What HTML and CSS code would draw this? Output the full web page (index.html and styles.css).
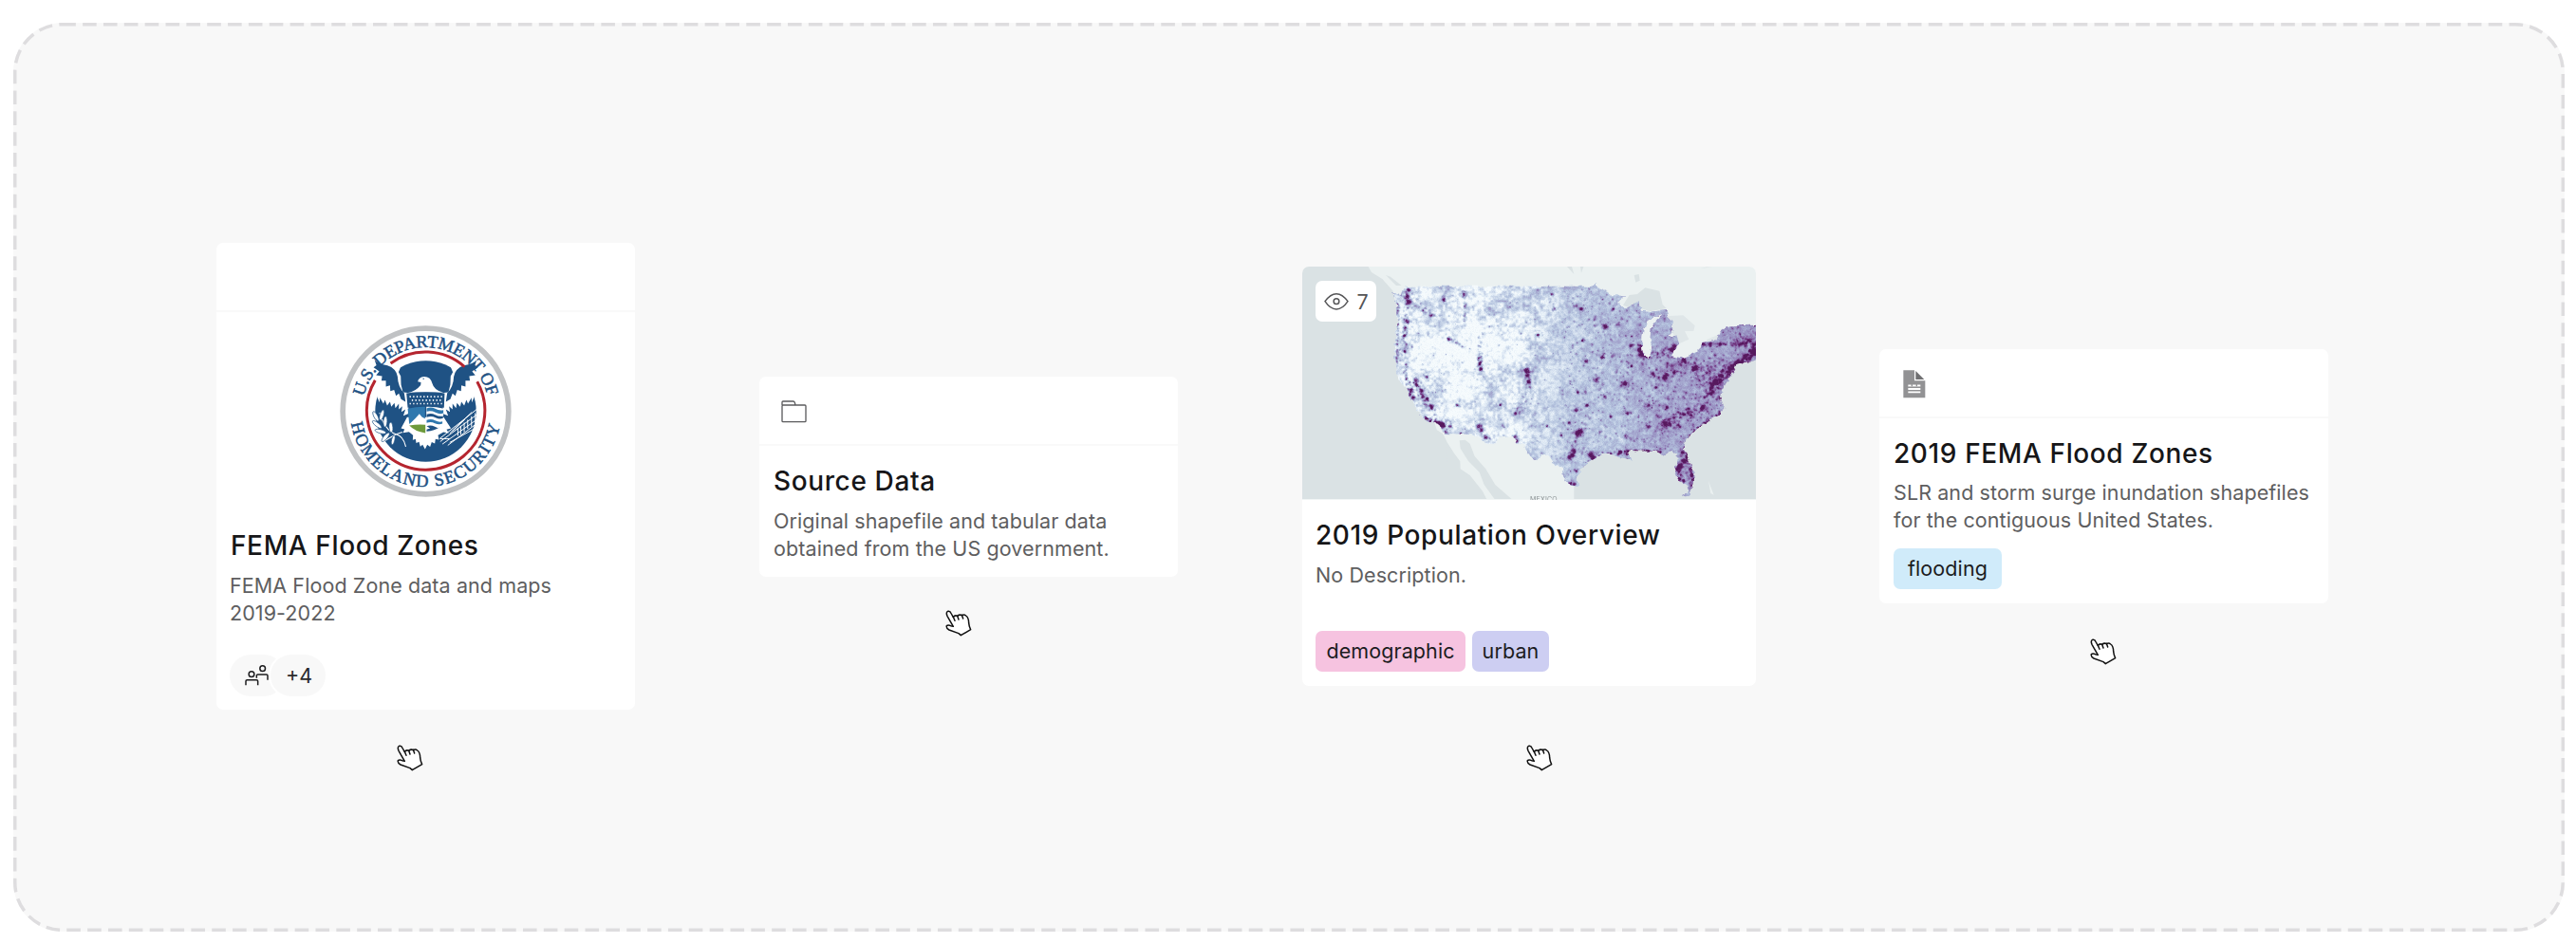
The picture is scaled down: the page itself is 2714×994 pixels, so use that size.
FILE: index.html
```html
<!DOCTYPE html>
<html lang="en">
<head>
<meta charset="utf-8">
<title>Content cards</title>
<link rel="stylesheet" href="styles.css">
</head>
<body>
<svg class="defs" width="0" height="0">
  <symbol id="hand" viewBox="54 45 84 84">
    <path d="M60 64Q55 52 62 49Q69 47 73 57L79 68Q84 60 92 64Q99 58 106 62Q113 57 119 63Q128 69 128 86L130 97L134 107L103 125L96 119L66 108Q56 102 58 95Q63 91 71 95L79 97Z" fill="#fff"/>
    <path d="M79 67L84 79M92 64L96 75M106 61L110 72" fill="none"/>
  </symbol>
</svg>
<main class="panel">
  <svg class="outline" width="2688" height="958"><rect x="1.75" y="1.75" width="2684.5" height="954.5" rx="50"/></svg>

  <section class="column column-agency">
    <article class="card">
      <div class="card-head"></div>
      <div class="seal-wrap">
        <svg class="seal" viewBox="24 24 544 544">
          <defs>
            <path id="arc-top" d="M100 250A201 201 0 0 1 492 250"/>
            <path id="arc-bottom" d="M60 334A239 239 0 0 0 532 334"/>
            <g id="wing">
              <path d="M122 158L140 195L142 250L150 268L151 253L162 272L167 260L174 278L183 266L187 282L197 270L200 286L211 272L211 290L222 280L219 298L232 290L225 310L240 304L246 238L224 236L218 212L217 185L210 172L216 158L205 130L160 110Z" fill="#fff"/>
              <path d="M134 133Q145 147 175 151Q202 160 207 186Q208 218 228 239L232 266L218 258L211 240L202 247L196 228L184 232L183 214L170 218L170 199L156 199L158 185L139 182L149 170L131 157L140 150Z" fill="#1f5284"/>
            </g>
          </defs>
          <circle cx="296" cy="296" r="262.500" fill="#fff" stroke="#c0c2c4" stroke-width="17"/>
          <circle cx="296" cy="296" r="160" fill="#1f5284"/>
          <use href="#wing"/>
          <use href="#wing" transform="matrix(-1 0 0 1 592 0)"/>
          <path d="M185 144A187 187 0 0 1 419 155M459 202A187 187 0 1 1 136 198" fill="none" stroke="#b5252f" stroke-width="9"/>
          <path d="M271 202Q273 188 291 186Q312 186 317 208Q322 229 352 237L240 237Q263 234 280 213L281 204Z" fill="#fff"/>
          <circle cx="289" cy="193" r="2" fill="#1f5284"/>
          <path d="M237 315L218 350L229 353L224 364L243 361L256 372L255 387L264 384L266 397L275 393L279 408L286 402L294 416L301 402L310 409L315 394L325 398L327 384L338 386L335 372L352 362L369 365L362 354L376 350L353 315Z" fill="#fff"/>
          <path d="M235 239Q296 231 356 239L354 285Q296 277 239 285Z" fill="#1f5284"/>
          <path d="M245 250H350M252 261H345M245 272H350" stroke="#fff" stroke-width="5" stroke-dasharray="4 7" fill="none"/>
          <path d="M239 288Q270 281 294 282V336H244Z" fill="#2f78ae"/>
          <path d="M244 337L264 318L276 304L284 314L295 320V346H250Z" fill="#fff"/>
          <path d="M244 341Q270 337 295 339V365Q262 360 244 341Z" fill="#6d9a3b"/>
          <path d="M298 282Q328 281 353 288L350 340Q337 359 298 364Z" fill="#fff"/>
          <path d="M299 287Q313 281 326 288T352 292V302Q341 307 327 300T299 297Z" fill="#2f78ae"/>
          <path d="M299 306Q313 300 326 307T351 311V318Q340 323 327 316T299 315Z" fill="#1f5284"/>
          <path d="M299 324Q313 318 326 325T349 328V335Q338 340 325 334T299 333Z" fill="#2f78ae"/>
          <path d="M299 343Q312 338 325 345T339 347Q325 357 299 360V354L310 350Z" fill="#1f5284"/>
          <path d="M150 300Q165 355 202 369Q225 374 233 408M202 369L160 393M202 369L222 362" fill="none" stroke="#fff" stroke-width="3.500"/>
          <g fill="#fff" stroke="#1f5284" stroke-width="2">
            <ellipse cx="138" cy="312" rx="6" ry="17" transform="rotate(-28 138 312)"/><ellipse cx="157" cy="308" rx="6" ry="17" transform="rotate(18 157 308)"/>
            <ellipse cx="142" cy="338" rx="6" ry="18" transform="rotate(-52 142 338)"/><ellipse cx="168" cy="329" rx="6" ry="17" transform="rotate(4 168 329)"/>
            <ellipse cx="153" cy="360" rx="6" ry="18" transform="rotate(-75 153 360)"/><ellipse cx="186" cy="347" rx="6" ry="16" transform="rotate(-4 186 347)"/>
            <ellipse cx="169" cy="378" rx="6" ry="18" transform="rotate(40 169 378)"/><ellipse cx="193" cy="387" rx="5" ry="15" transform="rotate(12 193 387)"/>
          </g>
          <path d="M340 383L460 288M342 392L467 300M349 400L468 315M366 404L468 327M372 395L470 340M372 366L442 299M380 360L420 322M342 383H372M398 350V374M407 342V370M418 332V362M429 323V352M441 312V345M453 302V338" fill="none" stroke="#fff" stroke-width="3"/>
          <text class="seal-text"><textPath href="#arc-top" textLength="540">U.S. DEPARTMENT OF</textPath></text>
          <text class="seal-text"><textPath href="#arc-bottom" textLength="668">HOMELAND SECURITY</textPath></text>
        </svg>
      </div>
      <div class="card-body">
        <h2>FEMA Flood Zones</h2>
        <p>FEMA Flood Zone data and maps 2019-2022</p>
        <div class="members">
          <span class="pill"><svg width="25" height="22" viewBox="116 515 75 66" fill="none" stroke="#1c1c1e" stroke-width="4.500"><circle cx="137" cy="544" r="8.500"/><circle cx="172" cy="526" r="8.500"/><path d="M119 579V566Q119 562 123 562H153Q157 562 157 566V579M153 556V548Q153 545 157 545H184Q188 545 188 549V562"/></svg></span>
          <span class="pill pill-more">+4</span>
        </div>
      </div>
    </article>
    <svg class="hand"><use href="#hand"/></svg>
  </section>

  <section class="column column-source">
    <article class="card">
      <div class="card-head"><svg class="folder" width="27" height="24" viewBox="98 95 81 72" fill="none" stroke="#5b5b5d" stroke-width="4"><path d="M101 110V101Q101 98 104 98H136Q140 98 141 102L143 110M104 110H173Q176 110 176 113V160Q176 163 173 163H104Q101 163 101 160V113Q101 110 104 110Z"/></svg></div>
      <div class="card-body">
        <h2>Source Data</h2>
        <p>Original shapefile and tabular data obtained from the US government.</p>
      </div>
    </article>
    <svg class="hand"><use href="#hand"/></svg>
  </section>

  <section class="column column-map">
    <article class="card">
      <div class="map">
        <canvas id="map" width="478" height="246"></canvas>
        <span class="map-label">MEXICO</span>
        <div class="views"><svg width="26" height="20" viewBox="88 99 78 60" fill="none" stroke="#555557" stroke-width="4.500"><path d="M91 128Q108 104 127 104T163 128Q146 153 127 153T91 128Z"/><circle cx="127" cy="128" r="8.500"/></svg><span>7</span></div>
      </div>
      <div class="card-body">
        <h2>2019 Population Overview</h2>
        <p>No Description.</p>
        <div class="tags"><span class="tag tag-pink">demographic</span><span class="tag tag-violet">urban</span></div>
      </div>
    </article>
    <svg class="hand"><use href="#hand"/></svg>
  </section>

  <section class="column column-zones">
    <article class="card">
      <div class="card-head"><svg class="doc" width="24" height="30" viewBox="104 89 72 90"><path d="M105 90H140V123H174V177H105Z" fill="#929294"/><path d="M144 92L171 119H144Z" fill="#6f6f71"/><path d="M120 138H130M134 138H145M149 138H159M120 149H159M120 159H159" stroke="#fff" stroke-width="5.500"/><path d="M120 141.500H159" stroke="#c8c8c9" stroke-width="2"/></svg></div>
      <div class="card-body">
        <h2>2019 FEMA Flood Zones</h2>
        <p>SLR and storm surge inundation shapefiles for the contiguous United States.</p>
        <div class="tags"><span class="tag tag-blue">flooding</span></div>
      </div>
    </article>
    <svg class="hand"><use href="#hand"/></svg>
  </section>
</main>
<script src="map.js"></script>
</body>
</html>
```
FILE: styles.css
```css
* { box-sizing: border-box; }
body { margin: 0; background: #fff; font-family: Inter, "Liberation Sans", sans-serif; color: #161618; }
.defs { position: absolute; }
.panel { position: relative; width: 2688px; height: 958px; margin: 24px 0 0 14px; padding-left: 214px; border-radius: 52px; background: #f8f8f8; display: flex; align-items: flex-start; }
.outline { position: absolute; left: 0; top: 0; fill: none; stroke: #dedddf; stroke-width: 3.5; stroke-dasharray: 14.6 7.25; stroke-dashoffset: 0.5; }
.column { display: flex; flex-direction: column; flex: none; }
.column-agency { width: 441px; margin-top: 232px; }
.column-source { width: 441px; margin: 373px 0 0 131px; }
.column-map { width: 478px; margin: 257px 0 0 131px; }
.column-zones { width: 472.500px; margin: 344px 0 0 130px; }
.card { background: #fff; border-radius: 7px; overflow: hidden; }
.card-head { height: 73px; border-bottom: 2px solid #f9f9f9; }
.column-source .card-head { padding: 25px 0 0 22.500px; }
.column-zones .card-head { padding: 21.500px 0 0 24.500px; }
.folder, .doc { display: block; }
.seal-wrap { height: 209px; padding: 14px 130px 0; }
.seal { display: block; width: 181px; height: 181px; }
.seal-text { font: 55px "Liberation Serif", serif; fill: #1f5284; stroke: #1f5284; stroke-width: 1.6px; }
.card-body { padding: 19px 14px 14.500px; }
.column-source .card-body { padding-left: 15px; padding-bottom: 15px; }
.column-zones .card-body { padding-left: 15px; }
h2 { margin: 0 0 10px; font-size: 28px; line-height: 36px; font-weight: 500; letter-spacing: 0.62px; white-space: nowrap; }
.column-agency h2 { position: relative; left: 1px; }
.column-zones h2 { margin-bottom: 9px; }
p { margin: 0; font-size: 21.500px; line-height: 29px; letter-spacing: 0.09px; color: #5e5e60; }
.column-agency p { max-width: 380px; }
.members { display: flex; margin-top: 28.500px; }
.pill { height: 44px; width: 58px; border-radius: 22px; background: #f8f8f8; display: flex; align-items: center; padding-left: 16px; font-size: 21.500px; letter-spacing: 0; color: #2a2a2c; }
.pill-more { margin-left: -15px; box-shadow: 0 0 0 2px #fff; position: relative; }
.map { position: relative; height: 246px; overflow: hidden; }
.map canvas { display: block; }
.map-label { position: absolute; left: 240px; top: 241px; font-size: 7px; line-height: 9px; letter-spacing: 0.2px; color: #8b9294; }
.views { position: absolute; left: 14px; top: 15px; width: 64px; height: 43px; border-radius: 7px; background: #fff; display: flex; align-items: center; padding-left: 8.500px; gap: 9px; font-size: 21.500px; color: #555557; }
.tags { display: flex; gap: 7px; margin-top: 14.500px; }
.column-map .tags { margin-top: 43.500px; }
.tag { height: 43.500px; line-height: 43px; border-radius: 7px; text-align: center; font-size: 21.500px; letter-spacing: 0.1px; color: #1c1c1e; }
.tag-pink { width: 158px; background: #f6c3e0; }
.tag-violet { width: 81px; background: #cdcef2; }
.tag-blue { width: 114px; background: #d0ebfa; }
.hand { width: 28px; height: 28px; stroke: #111; stroke-width: 4.5; stroke-linejoin: round; stroke-linecap: round; }
.column-agency .hand { margin: 37px 0 0 190px; }
.column-source .hand { margin: 34.500px 0 0 195.500px; }
.column-map .hand { margin: 62.500px 0 0 235.500px; }
.column-zones .hand { margin: 37px 0 0 221.500px; }
```
FILE: map.js
```js
const W = 478, H = 246;
const canvas = document.getElementById('map');
const ctx = canvas.getContext('2d');

let seed = 41;
const rnd = () => {
  seed = (seed * 1664525 + 1013904223) >>> 0;
  return seed / 4294967296;
};

// Outlines are kept in thirds of a pixel, offset by (21, 18).
function trace(c, pts) {
  c.beginPath();
  for (let i = 0; i < pts.length; i += 2) c.lineTo((pts[i] - 21) / 3, (pts[i + 1] - 18) / 3);
  c.closePath();
}
function fill(pts, color) {
  trace(ctx, pts);
  ctx.fillStyle = color;
  ctx.fill();
}

const WATER = '#dae2e4', LAND = '#ebf1f1';
const us = [308,95,320,105,335,108,345,80,940,80,950,68,952,84,985,98,1000,108,1045,112,1020,132,1040,150,1060,145,1085,130,1095,155,1130,160,1170,156,1178,178,1190,190,1192,218,1180,238,1200,236,1210,262,1188,300,1225,308,1262,292,1282,272,1282,258,1330,252,1340,225,1365,205,1456,203,1456,310,1420,322,1393,330,1385,350,1362,390,1348,415,1342,440,1357,465,1345,485,1310,502,1270,530,1235,565,1228,590,1240,625,1258,665,1260,705,1245,740,1218,743,1240,728,1238,712,1215,700,1198,660,1204,635,1205,615,1185,600,1165,614,1140,603,1060,600,1045,608,1062,632,1030,625,1000,612,965,612,940,632,900,655,890,690,895,712,860,704,845,685,843,658,820,645,805,622,780,610,760,630,740,612,720,582,700,575,690,555,640,560,632,580,600,578,570,552,540,548,470,546,458,520,400,498,385,470,362,436,350,405,325,375,316,320,313,260,322,200,320,130];

ctx.fillStyle = WATER;
ctx.fillRect(0, 0, W, H);
fill([230,18,240,36,275,58,305,95,450,546,720,600,1000,600,1260,400,1390,330,1456,305,1456,18], LAND);
fill([190,20,245,45,285,70,308,95,316,300,325,375,360,440,400,505,470,550,480,640,190,640], WATER);
fill([890,655,1000,612,1100,600,1205,610,1240,745,1456,745,1456,310,1393,330,1345,440,1357,470,1235,565,1205,600,900,640], WATER);
fill([465,546,480,575,501,608,520,634,521,658,551,678,591,728,605,756,700,756,880,756,880,715,900,650,720,500,560,500], LAND);
fill([518,568,536,566,551,578,566,618,601,658,631,708,686,756,631,756,596,708,581,668,546,633,521,593], WATER);
fill([1035,140,1055,108,1080,105,1105,85,1150,95,1160,138,1172,150,1120,160,1090,150,1060,150], WATER);
fill([1175,175,1225,172,1262,205,1258,222,1230,222,1243,248,1212,262,1190,225], '#dfe6e8');
fill([1228,308,1255,292,1285,268,1285,285,1262,298], LAND);
fill([1300,248,1340,232,1345,250,1300,258], '#e0e8e9');
fill([858,18,880,42,873,18], WATER);
fill([900,18,903,38,910,18], WATER);
fill([1070,45,1085,42,1088,62,1075,68], WATER);
fill([1295,20,1280,24,1320,18], WATER);
fill([285,45,300,50,335,78,318,78], WATER);
fill([1305,695,1312,715,1322,740,1312,735], LAND);

// Land mask of the survey area, without Lake Michigan.
const maskCanvas = document.createElement('canvas');
maskCanvas.width = W;
maskCanvas.height = H;
const m = maskCanvas.getContext('2d');
trace(m, us);
m.fill();
m.globalCompositeOperation = 'destination-out';
trace(m, [1162,172,1142,176,1128,180,1112,192,1100,215,1096,240,1095,275,1100,300,1112,306,1122,290,1126,272,1120,245,1124,215,1138,195]);
m.fill();
const mask = m.getImageData(0, 0, W, H).data;

const density = new Float32Array(W * H);
function spot(x, y, r, a) {
  const R = Math.ceil(r * 2.6);
  const x0 = Math.round(x), y0 = Math.round(y);
  for (let j = -R; j <= R; j++) for (let i = -R; i <= R; i++) {
    const px = x0 + i, py = y0 + j;
    if (px < 0 || py < 0 || px >= W || py >= H) continue;
    const dx = px - x, dy = py - y;
    density[py * W + px] += a * Math.exp(-(dx * dx + dy * dy) / (r * r)) * (0.65 + rnd() * 0.6);
  }
}
function grid(step) {
  const w = Math.ceil(W / step) + 3, h = Math.ceil(H / step) + 3;
  const v = Array.from({ length: w * h }, rnd);
  return (x, y) => {
    const gx = x / step, gy = y / step, i = gx | 0, j = gy | 0;
    const a = gx - i, b = gy - j;
    return (v[j * w + i] * (1 - a) + v[j * w + i + 1] * a) * (1 - b)
      + (v[(j + 1) * w + i] * (1 - a) + v[(j + 1) * w + i + 1] * a) * b;
  };
}
const big = grid(22), mid = grid(7), fine = grid(2.4);
const step = (a, b, v) => {
  const t = Math.min(1, Math.max(0, (v - a) / (b - a)));
  return t * t * (3 - 2 * t);
};

for (let y = 0; y < H; y++) for (let x = 0; x < W; x++) {
  const east = step(215, 300, x + (y - 120) * 0.08);
  const far = step(300, 410, x);
  const basin = Math.exp(-(((x - 160) / 36) ** 2 + ((y - 100) / 40) ** 2));
  const west = 0.09 + 0.3 * (big(x, y) - 0.4) + 0.3 * (mid(x, y) - 0.48) + 0.36 * (fine(x, y) - 0.5) - basin * 0.16;
  const plain = 0.28 + 0.08 * (big(x, y) - 0.5) + 0.1 * (mid(x, y) - 0.5) + 0.2 * (fine(x, y) - 0.5);
  density[y * W + x] = Math.max(0, west) * (1 - east) + plain * east + far * 0.15 + (rnd() - 0.5) * 0.08;
}

// Towns.
for (let i = 0; i < 2600; i++) {
  const x = 95 + rnd() * 383, y = 20 + rnd() * 220;
  const chance = x > 270 ? 0.45 + (x - 270) / 380 : 0.16 + 0.5 * Math.max(0, mid(x, y) - 0.5);
  if (rnd() < chance) spot(x, y, 0.7 + rnd() * 0.6, 0.08 + rnd() * 0.26);
}
for (let i = 0; i < 140; i++) spot(280 + rnd() * 198, 35 + rnd() * 165, 1.5, 0.3);

// Cities: x, y, radius.
const cities = [
  356,90,4, 359,128,6, 352,112,4, 352,190,5, 345,210,4, 343,235,2, 468,122,4, 531,105,2, 428,170,2, 400,155,2, 484,246,4, 344,285,2,
  577,305,3, 580,325,4, 584,340,3, 728,345,5, 730,360,4, 735,380,3, 412,366,3, 362,410,6, 370,430,4, 380,390,4, 395,410,3, 415,435,3, 428,462,3, 400,425,3,
  440,510,5, 455,515,7, 466,520,6, 472,540,4, 485,522,3, 510,455,3, 577,522,6, 586,535,4, 600,558,4, 521,545,2, 693,481,3, 698,566,4, 692,555,3, 645,455,2,
  902,150,3, 817,150,2, 808,105,2, 765,233,3, 976,206,6, 1004,150,2, 905,250,2, 918,315,3, 968,303,3, 948,376,5, 1040,387,6, 1090,295,6, 1085,280,4, 1110,300,4, 1060,265,3,
  1190,280,6, 1195,268,4, 1128,355,4, 1165,370,5, 1170,358,3, 1138,399,3, 1195,350,3, 1225,312,4, 1260,338,4, 1115,455,3, 1048,481,3, 886,471,4, 920,455,3, 975,428,2, 890,414,2,
  897,539,8, 890,545,4, 880,600,4, 866,622,5, 874,612,3, 932,612,7, 938,622,4, 994,490,2, 1167,515,7, 1115,523,3, 1240,480,4, 1285,463,4, 1172,462,3, 1210,520,3, 1043,552,3,
  1325,380,5, 1315,390,5, 1312,418,3, 1340,433,3, 1345,362,4, 1372,340,5, 1392,328,7, 1402,322,5, 1420,300,4, 1447,280,6, 1452,290,6, 1450,262,4, 1430,250,2, 1310,260,2, 1285,262,2, 1340,262,2,
  1205,658,4, 1215,650,4, 1225,630,4, 1222,605,3, 1250,675,3, 1258,690,4, 1256,708,4, 1212,690,3, 1260,540,2, 1045,610,3, 1025,603,3, 886,663,2, 880,704,3, 868,702,2, 1060,331,2, 1050,600,2, 838,550,2, 793,521,2, 863,510,2
];
for (let i = 0; i < cities.length; i += 3) {
  const x = (cities[i] - 21) / 3, y = (cities[i + 1] - 18) / 3, r = cities[i + 2];
  spot(x, y, 0.7 + r * 0.35, 0.42 + r * 0.05);
  for (let k = 0; k < r * 3; k++) {
    const a = rnd() * 6.28, d = rnd() * r * 1.7;
    spot(x + Math.cos(a) * d, y + Math.sin(a) * d, 1.1, 0.15);
  }
}

// Settled corridors: x1, y1, x2, y2, width, weight.
const roads = [
  322,130,320,330,3,0.2, 350,85,345,240,6,0.24, 345,240,340,300,6,0.14, 345,330,365,440,7,0.3, 370,370,435,480,8,0.32, 395,492,470,515,5,0.45,
  580,240,583,350,5,0.2, 485,246,540,275,4,0.2, 531,95,535,200,4,0.18, 728,330,740,400,5,0.2, 740,400,700,480,10,0.14, 395,150,450,170,9,0.18,
  1395,330,1456,280,13,0.42, 1395,325,1456,322,2,0.4, 1320,390,1392,328,12,0.38, 1290,440,1365,345,14,0.22, 1270,370,1345,320,20,0.16, 1155,515,1300,455,14,0.24, 1285,262,1440,262,5,0.18, 1220,315,1270,345,12,0.22,
  1270,530,1350,475,5,0.3, 1232,590,1258,690,5,0.36, 1202,650,1222,695,7,0.3, 1205,650,1240,625,6,0.22, 1005,610,1060,600,5,0.28, 1060,600,1165,604,3,0.45, 940,620,1000,608,4,0.28,
  866,622,897,540,6,0.18, 1085,260,1100,300,6,0.3, 1120,300,1195,280,9,0.16, 1385,260,1456,245,15,0.16, 1240,560,1270,530,4,0.36, 1130,385,1230,320,20,0.12
];
for (let i = 0; i < roads.length; i += 6) {
  const [x1, y1, x2, y2, w, a] = roads.slice(i, i + 6);
  const n = Math.hypot(x2 - x1, y2 - y1) * Math.max(1, w / 8) / 3;
  for (let k = 0; k < n; k++) {
    const t = rnd();
    spot((x1 + (x2 - x1) * t + (rnd() - 0.5) * w * 2.4 - 21) / 3, (y1 + (y2 - y1) * t + (rnd() - 0.5) * w * 2.4 - 18) / 3, 1.2, a);
  }
}

const ramp = [[0, 246, 251, 253], [0.1, 226, 236, 246], [0.3, 180, 195, 222], [0.48, 155, 150, 197], [0.68, 133, 97, 163], [0.88, 106, 42, 117], [1.1, 86, 25, 94]];
function shade(d) {
  if (d <= 0) return ramp[0].slice(1);
  for (let i = 1; i < ramp.length; i++) if (d < ramp[i][0]) {
    const a = ramp[i - 1], b = ramp[i], t = (d - a[0]) / (b[0] - a[0]);
    return [1, 2, 3].map(k => a[k] + (b[k] - a[k]) * t);
  }
  return ramp[ramp.length - 1].slice(1);
}
const image = ctx.getImageData(0, 0, W, H);
for (let y = 0; y < H; y++) for (let x = 0; x < W; x++) {
  const p = y * W + x;
  const jx = Math.min(W - 1, Math.max(0, Math.round(x + (fine(x, y) - 0.5) * 4)));
  const jy = Math.min(H - 1, Math.max(0, Math.round(y + (fine(y / 2, x / 2) - 0.5) * 3)));
  const alpha = mask[(jy * W + jx) * 4 + 3] / 255;
  if (!alpha) continue;
  const c = shade(density[p]);
  for (let k = 0; k < 3; k++) image.data[p * 4 + k] += (c[k] - image.data[p * 4 + k]) * alpha;
}
ctx.putImageData(image, 0, 0);
ctx.fillStyle = '#f1f5f5';
ctx.fillRect(0, H - 1, W, 1);
```
